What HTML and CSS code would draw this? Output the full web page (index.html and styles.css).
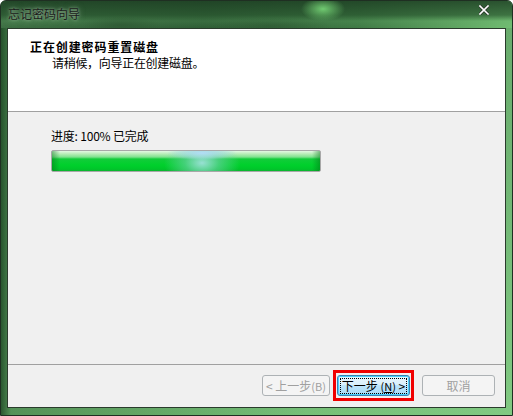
FILE: index.html
```html
<!DOCTYPE html>
<html lang="zh">
<head>
<meta charset="utf-8">
<title>忘记密码向导</title>
<link rel="stylesheet" href="styles.css">
</head>
<body>
<div class="window">
  <div class="titlebar">
    <span class="title">忘记密码向导</span>
    <span class="close">
      <svg width="10" height="10" viewBox="0 0 10 10"><path d="M1 1 L9 9 M9 1 L1 9" stroke="#2b3b2b" stroke-width="3.2" stroke-linecap="square"/><path d="M1 1 L9 9 M9 1 L1 9" stroke="#ffffff" stroke-width="1.6" stroke-linecap="square"/></svg>
    </span>
  </div>
  <div class="client">
    <div class="header">
      <div class="h-title">正在创建密码重置磁盘</div>
      <div class="h-sub">请稍候，向导正在创建磁盘。</div>
    </div>
    <div class="body">
      <div class="progress-label">进度: 100% 已完成</div>
      <div class="progress"><div class="glow"></div></div>
    </div>
    <div class="footer">
      <div class="btn disabled prev">&lt; 上一步 <span class="mn">(B)</span></div>
      <div class="focus-ring"><div class="btn default"><span class="dots">下一步 <span class="mn">(<u>N</u>)</span> &gt;</span></div></div>
      <div class="btn disabled cancel">取消</div>
    </div>
  </div>
</div>
</body>
</html>
```
FILE: styles.css
```css
* { box-sizing: border-box; }
html, body { margin: 0; padding: 0; }
body {
  width: 513px;
  height: 416px;
  overflow: hidden;
  background: #ffffff;
  font-family: "Noto Sans CJK SC", "Noto Sans", sans-serif;
  font-size: 12px;
  color: #000;
}
.window {
  width: 513px;
  height: 416px;
  border: 1px solid #1f2f22;
  border-radius: 6px 6px 0 0;
  display: flex;
  flex-direction: column;
  background:
    linear-gradient(to right, rgba(30,70,36,0.85) 0px, rgba(50,100,56,0.5) 10px, rgba(0,0,0,0) 60%, rgba(150,220,150,0.35) 100%),
    linear-gradient(to bottom, #4f8f55 0px, #5ea464 200px, #76c078 416px);
  background-color: #5ea464;
}
.titlebar {
  height: 27px;
  flex: none;
  position: relative;
  display: flex;
  align-items: flex-start;
  background:
    radial-gradient(ellipse 22px 12px at 322px 8px, rgba(120,215,120,0.9), rgba(120,215,120,0) 100%),
    radial-gradient(ellipse 40px 8px at 120px 24px, rgba(40,80,45,0.55), rgba(40,80,45,0) 100%),
    radial-gradient(ellipse 60px 8px at 270px 25px, rgba(40,80,45,0.5), rgba(40,80,45,0) 100%),
    linear-gradient(to bottom, rgba(30,64,36,0.85) 0px, rgba(40,84,46,0.7) 14px, rgba(100,170,104,0.2) 20px, rgba(120,190,120,0) 27px),
    linear-gradient(to right, #3d6e43 0px, #2f5e36 40%, #3f7a45 70%, #71bd72 100%);
  border-radius: 5px 5px 0 0;
}
.title {
  margin: 6px 0 0 7px;
  font-size: 12px;
  line-height: 14px;
  color: #1c1c1c;
  text-shadow: 0 0 3px rgba(200,230,200,0.7), 0 0 6px rgba(200,230,200,0.5);
}
.close {
  position: absolute;
  left: 478px;
  top: 4px;
  width: 12px;
  height: 12px;
  display: flex;
}
.client {
  margin: 0 6px 7px 6px;
  flex: 1;
  border: 1px solid #2a3b2c;
  display: flex;
  flex-direction: column;
  background: #f0f0f0;
}
.header {
  height: 83px;
  flex: none;
  background: #ffffff;
  border-bottom: 1px solid #a0a0a0;
  padding: 10px 0 0 22px;
}
.h-title {
  font-weight: bold;
  font-size: 12px;
  line-height: 15px;
  letter-spacing: 0.9px;
}
.h-sub {
  margin: 1px 0 0 22px;
  line-height: 15px;
  letter-spacing: -0.3px;
}
.body {
  flex: 1;
  padding: 17px 0 0 43px;
  border-bottom: 1px solid #a0a0a0;
}
.progress-label {
  line-height: 14px;
  font-size: 12px;
  letter-spacing: -0.2px;
}
.progress {
  margin-top: 7px;
  width: 270px;
  height: 22px;
  border: 1px solid #a8a8a8;
  border-radius: 2px;
  position: relative;
  overflow: hidden;
  background:
    linear-gradient(to right, rgba(0,110,20,0.45) 0px, rgba(0,0,0,0) 8px, rgba(0,0,0,0) 260px, rgba(0,110,20,0.45) 268px),
    linear-gradient(to bottom, #e4f8e4 0px, #b6ecb6 3px, #7fe28f 6px, #12cc3a 8px, #00d02c 14px, #00c62a 18px, #0bb430 20px);
}
.glow {
  position: absolute;
  left: 100px;
  top: 0;
  width: 100px;
  height: 100%;
  background:
    radial-gradient(ellipse 36px 7px at 50px 2px, rgba(180,220,250,0.95), rgba(180,220,250,0) 100%),
    radial-gradient(ellipse 38px 24px at 50px 12px, rgba(160,225,220,0.95), rgba(110,210,170,0.6) 45%, rgba(110,210,170,0) 100%);
}
.footer {
  height: 42px;
  flex: none;
  display: flex;
  align-items: center;
  justify-content: flex-end;
  padding: 0 10px 1px 0;
}
.btn {
  width: 73px;
  height: 21px;
  border: 1px solid #adb2b5;
  border-radius: 3px;
  display: flex;
  align-items: center;
  justify-content: center;
  font-size: 12px;
  line-height: 14px;
  white-space: nowrap;
}
.btn.disabled {
  color: #a0a0a0;
  background: #f4f4f4;
}
.btn.prev {
  width: 68px;
  margin-right: 3px;
}
.btn .mn { font-size: 11px; }
.focus-ring {
  border: 3px solid #f00000;
  padding: 2px 1px;
}
.btn.default {
  border: 1px solid #3c7fb1;
  box-shadow: inset 0 0 0 1px #48d0fc;
  background: linear-gradient(to bottom, #eaf6fd 0%, #d9f0fc 45%, #bee6fd 50%, #a7d9f5 100%);
  color: #000;
}
.btn.default .dots {
  outline: 1px dotted #000;
  outline-offset: 0px;
  padding: 0 1px;
  line-height: 13px;
}
.cancel {
  margin-left: 8px;
}
```
